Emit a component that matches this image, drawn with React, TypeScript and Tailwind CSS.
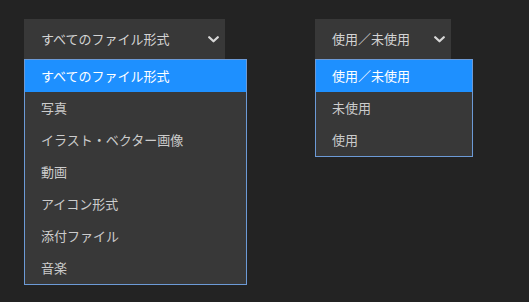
import { useState } from 'react';

const fileTypes = [
  'すべてのファイル形式',
  '写真',
  'イラスト・ベクター画像',
  '動画',
  'アイコン形式',
  '添付ファイル',
  '音楽',
];

const usageTypes = ['使用／未使用', '未使用', '使用'];

function Chevron() {
  return (
    <svg width="11" height="7" viewBox="0 0 11 7" className="shrink-0">
      <path d="M1.2 1.2 L5.5 5.3 L9.8 1.2" fill="none" stroke="#d8d8d8" strokeWidth="2.2" strokeLinecap="round" strokeLinejoin="round" />
    </svg>
  );
}

function Select({ options, width, menuWidth }: { options: string[]; width: string; menuWidth: string }) {
  const [selected] = useState(0);
  return (
    <div className="relative">
      <button className={`${width} h-10 bg-[#383838] flex items-center justify-between pl-[17px] pr-[6px] text-[13px] text-[#d4d4d4]`}>
        <span>{options[selected]}</span>
        <Chevron />
      </button>
      <ul className={`absolute left-0 top-10 ${menuWidth} bg-[#383838] border border-[#6c9ad6]`}>
        {options.map((opt, i) => (
          <li
            key={opt}
            className={`h-8 flex items-center pl-4 text-[13px] ${i === selected ? 'bg-[#1e90ff] text-white' : 'text-[#cccccc]'}`}
          >
            {opt}
          </li>
        ))}
      </ul>
    </div>
  );
}

export default function App() {
  return (
    <div
      className="w-[529px] h-[302px] bg-[#232323] pt-[19px] pl-6 flex gap-[90px]"
      style={{ fontFamily: '"Noto Sans CJK JP", "Noto Sans", sans-serif' }}
    >
      <Select options={fileTypes} width="w-[201px]" menuWidth="w-[223px]" />
      <Select options={usageTypes} width="w-[136px]" menuWidth="w-[158px]" />
    </div>
  );
}
